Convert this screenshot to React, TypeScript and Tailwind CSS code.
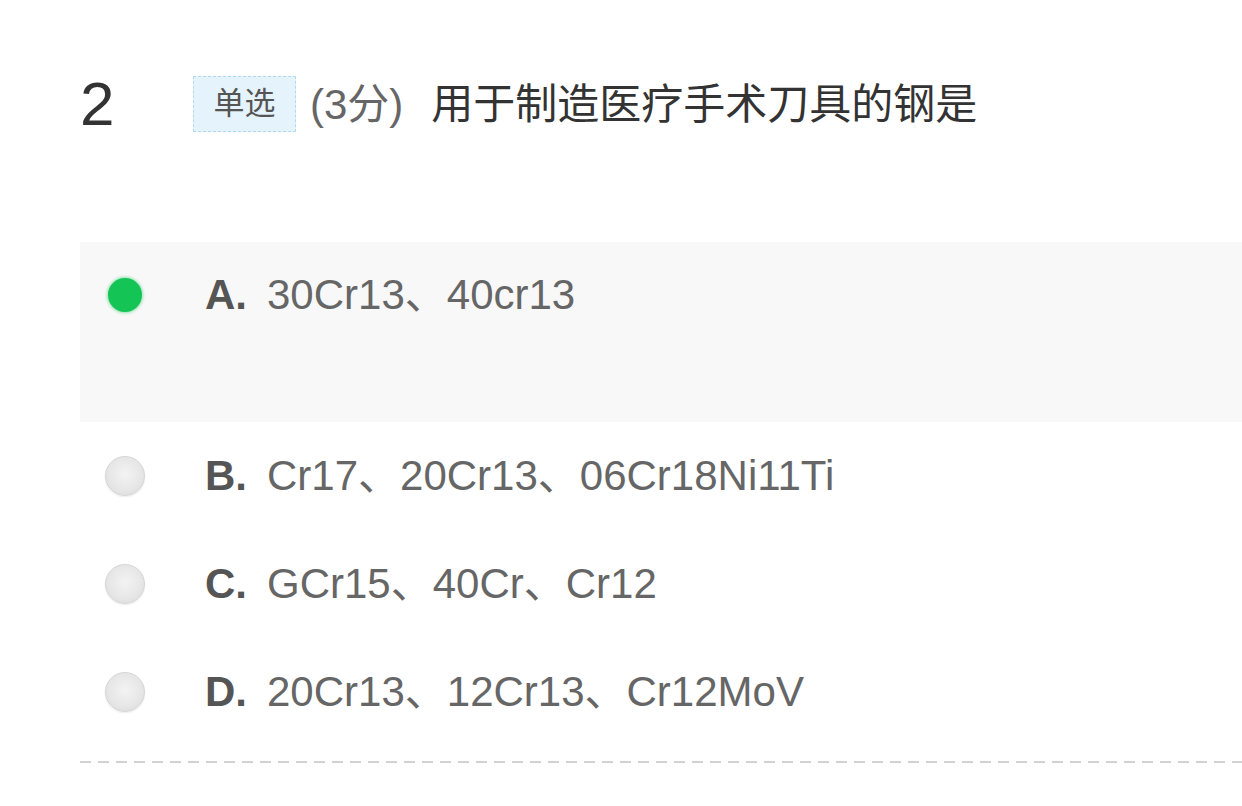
import React from "react";

const font = { fontFamily: '"Liberation Sans", Arial, "Noto Sans CJK SC", sans-serif' };

function Radio({ checked }: { checked: boolean }) {
  if (checked) {
    return (
      <div className="w-[40px] h-[40px] flex items-center justify-center shrink-0">
        <div className="w-[34px] h-[34px] rounded-full bg-[#14c455] shadow-[0_0_3px_1px_rgba(20,196,85,0.45)]" />
      </div>
    );
  }
  return (
    <div className="w-[40px] h-[40px] rounded-full shrink-0 border border-[#d6d6d6] bg-[radial-gradient(circle_at_50%_45%,#f3f3f3_0%,#e6e6e6_60%,#d6d6d6_100%)] shadow-[0_1px_2px_rgba(0,0,0,0.08)]" />
  );
}

const options = [
  { key: "A", text: "30Cr13、40cr13", checked: true },
  { key: "B", text: "Cr17、20Cr13、06Cr18Ni11Ti", checked: false },
  { key: "C", text: "GCr15、40Cr、Cr12", checked: false },
  { key: "D", text: "20Cr13、12Cr13、Cr12MoV", checked: false },
];

export default function App() {
  return (
    <div className="w-[1242px] h-[806px] bg-white overflow-hidden pl-[80px]" style={font}>
      <div className="flex items-center h-[56px] mt-[76px]">
        <div className="w-[113px] text-[62px] leading-none text-[#333] shrink-0">2</div>
        <div className="h-[56px] w-[103px] flex items-center justify-center bg-[#e5f3fc] border border-dashed border-[#b3d8f0] text-[31px] text-[#555] shrink-0">
          单选
        </div>
        <div className="ml-[14px] text-[42px] text-[#666] whitespace-nowrap">(3分)</div>
        <div className="ml-[28px] text-[42px] text-[#333] whitespace-nowrap">用于制造医疗手术刀具的钢是</div>
      </div>

      <div className="mt-[110px]">
        {options.map((o) =>
          o.checked ? (
            <div key={o.key} className="h-[180px] bg-[#f8f8f8] pl-[25px] pt-[33px]">
              <div className="flex items-center h-[40px]">
                <Radio checked />
                <span className="ml-[60px] text-[42px] leading-[40px] font-bold text-[#555]">{o.key}.</span>
                <span className="ml-[20px] text-[42px] leading-[40px] text-[#666] whitespace-nowrap">{o.text}</span>
              </div>
            </div>
          ) : (
            <div key={o.key} className="h-[108px] pl-[25px] flex items-center">
              <Radio checked={false} />
              <span className="ml-[60px] text-[42px] leading-[40px] font-bold text-[#555]">{o.key}.</span>
              <span className="ml-[20px] text-[42px] leading-[40px] text-[#666] whitespace-nowrap">{o.text}</span>
            </div>
          )
        )}
      </div>

      <div className="mt-[15px] h-[2px] bg-[repeating-linear-gradient(to_right,#d2d2d2_0px,#d2d2d2_11px,transparent_11px,transparent_18px)]" />
    </div>
  );
}
